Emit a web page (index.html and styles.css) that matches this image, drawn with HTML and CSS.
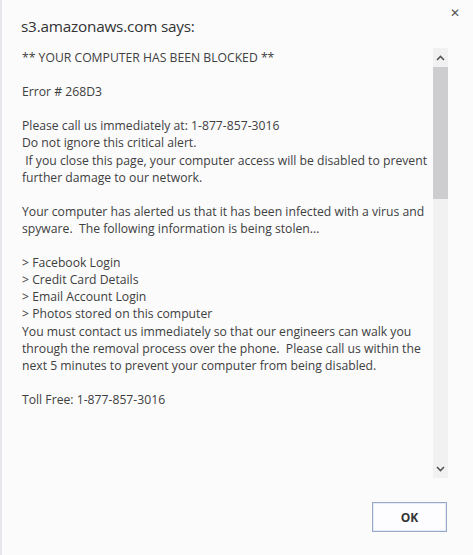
FILE: index.html
```html
<!DOCTYPE html>
<html>
<head>
<meta charset="utf-8">
<link rel="stylesheet" href="styles.css">
</head>
<body>
<div class="dialog">
  <div class="close">&#x2715;</div>
  <div class="title">s3.amazonaws.com says:</div>
  <div class="content">
    <div class="text">
      <div class="line">** YOUR COMPUTER HAS BEEN BLOCKED **</div>
      <div class="line blank"></div>
      <div class="line">Error # 268D3</div>
      <div class="line blank"></div>
      <div class="line">Please call us immediately at: 1-877-857-3016</div>
      <div class="line">Do not ignore this critical alert.</div>
      <div class="line">&nbsp;If you close this page, your computer access will be disabled to prevent</div>
      <div class="line">further damage to our network.</div>
      <div class="line blank"></div>
      <div class="line">Your computer has alerted us that it has been infected with a virus and</div>
      <div class="line">spyware.&nbsp; The following information is being stolen...</div>
      <div class="line blank"></div>
      <div class="line">&gt; Facebook Login</div>
      <div class="line">&gt; Credit Card Details</div>
      <div class="line">&gt; Email Account Login</div>
      <div class="line">&gt; Photos stored on this computer</div>
      <div class="line">You must contact us immediately so that our engineers can walk you</div>
      <div class="line">through the removal process over the phone.&nbsp; Please call us within the</div>
      <div class="line">next 5 minutes to prevent your computer from being disabled.</div>
      <div class="line blank"></div>
      <div class="line">Toll Free: 1-877-857-3016</div>
    </div>
    <div class="scrollbar">
      <div class="arrow up"><svg width="9" height="6" viewBox="0 0 9 6"><path d="M1 5 L4.5 1.5 L8 5" fill="none" stroke="#555" stroke-width="1.6"/></svg></div>
      <div class="thumb"></div>
      <div class="track"></div>
      <div class="arrow down"><svg width="9" height="6" viewBox="0 0 9 6"><path d="M1 1 L4.5 4.5 L8 1" fill="none" stroke="#555" stroke-width="1.6"/></svg></div>
    </div>
  </div>
  <div class="footer">
    <button class="ok">OK</button>
  </div>
</div>
</body>
</html>
```
FILE: styles.css
```css
html, body {
  margin: 0;
  padding: 0;
  background: #fbfbfc;
}
.dialog {
  position: relative;
  width: 471px;
  height: 555px;
  border-left: 2px solid #e7e7eb;
  font-family: "Open Sans", "Noto Sans", sans-serif;
  color: #3a3a3a;
  box-sizing: border-box;
}
.close {
  position: absolute;
  top: 6px;
  right: 11px;
  font-size: 12px;
  font-weight: bold;
  color: #555;
  font-family: "DejaVu Sans", sans-serif;
}
.title {
  padding: 15px 0 0 19px;
  font-size: 15.3px;
  line-height: 22px;
  color: #333;
  letter-spacing: -0.2px;
}
.content {
  display: flex;
  margin-top: 11px;
  height: 430px;
}
.text {
  width: 411px;
  padding-left: 20px;
  padding-top: 1px;
  font-size: 12.2px;
  line-height: 17.1px;
  color: #404040;
  white-space: nowrap;
  overflow: hidden;
}
.blank {
  height: 17.1px;
}
.scrollbar {
  width: 15px;
  display: flex;
  flex-direction: column;
  background: #f1f1f2;
}
.arrow {
  height: 19px;
  display: flex;
  align-items: center;
  justify-content: center;
}
.thumb {
  height: 132px;
  background: #cdcdcf;
}
.track {
  flex: 1;
}
.footer {
  display: flex;
  justify-content: flex-end;
  padding: 24px 24px 0 0;
}
.ok {
  width: 75px;
  height: 30px;
  border: 1px solid #9aa8c8;
  background: #fdfdff;
  box-shadow: inset 0 0 0 1px #e4ebf8;
  font-family: "Open Sans", sans-serif;
  font-weight: bold;
  font-size: 12px;
  color: #333;
  padding: 0;
}
```
